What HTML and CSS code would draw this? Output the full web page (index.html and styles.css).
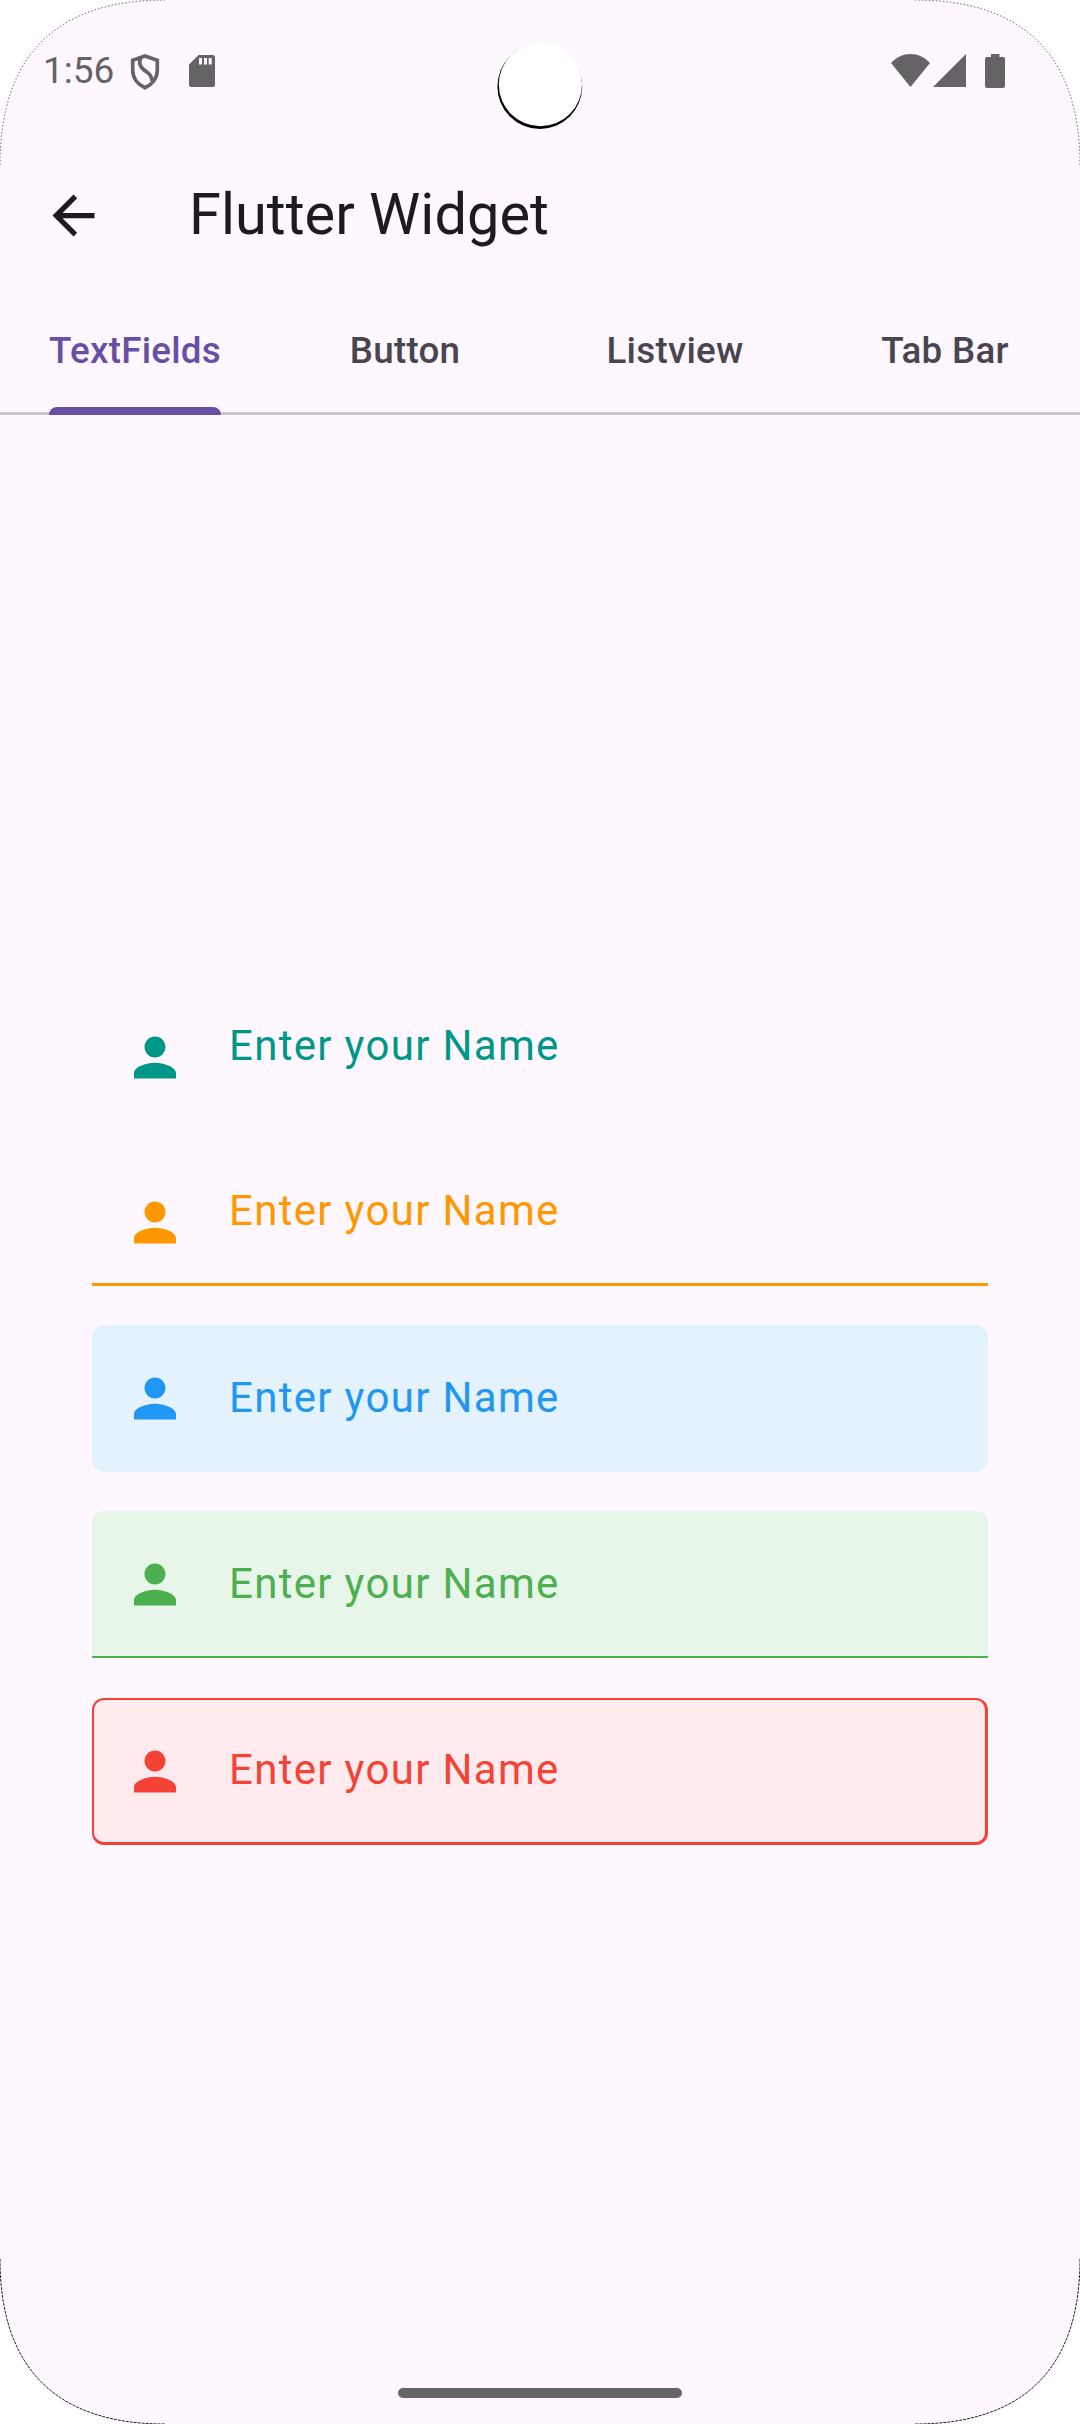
FILE: index.html
```html
<!DOCTYPE html>
<html lang="en">
<head>
<meta charset="utf-8">
<title>Flutter Widget</title>
<link rel="stylesheet" href="styles.css">
</head>
<body>
<svg class="defs" width="0" height="0" aria-hidden="true">
  <symbol id="person" viewBox="-0.190 0 24 24"><path d="M12 12c2.210 0 4-1.790 4-4s-1.790-4-4-4-4 1.790-4 4 1.790 4 4 4zm0 2c-2.670 0-8 1.340-8 4v2h16v-2c0-2.660-5.330-4-8-4z"/></symbol>
</svg>
<div class="screen">
  <header class="status">
    <span class="time">1:56</span>
    <svg class="shield" viewBox="0 0 30 36"><path d="M15 2 27.300 6.300V16c0 8-5 14.500-12.300 17.700C7.700 30.500 2.700 24 2.700 16V6.300zM11 3.500C8.500 8 9.500 12 13.500 15.500S22 20.500 22 27" fill="none" stroke="currentColor" stroke-width="3.700"/></svg>
    <svg class="sd" viewBox="0 0 26 32"><path fill-rule="evenodd" d="M9.500 0H23.500A2.500 2.500 0 0 1 26 2.500V29.500A2.500 2.500 0 0 1 23.500 32H2.500A2.500 2.500 0 0 1 0 29.500V9.500zM10 3v6.500h3V3zM15 3v6.500h3V3zM19.700 3v6.500h3V3z"/></svg>
    <div class="signals">
      <svg class="wifi" viewBox="0 0 39 33"><path d="M0 9C11-3 28-3 39 9L19.500 33z"/></svg>
      <svg class="cell" viewBox="0 0 33 33"><path d="M33 0V33H0z"/></svg>
      <svg class="battery" viewBox="0 0 20 34"><path d="M6 0h8.500v3H18a2 2 0 0 1 2 2v27a2 2 0 0 1-2 2H2a2 2 0 0 1-2-2V5a2 2 0 0 1 2-2h4z"/></svg>
    </div>
  </header>
  <div class="appbar">
    <svg class="back" viewBox="0 0 24 24"><path d="M20 11H7.830l5.590-5.590L12 4l-8 8 8 8 1.410-1.410L7.830 13H20v-2z"/></svg>
    <h1 class="title">Flutter Widget</h1>
  </div>
  <nav class="tabs">
    <div class="tab active"><span class="label">TextFields</span></div>
    <div class="tab"><span class="label">Button</span></div>
    <div class="tab"><span class="label">Listview</span></div>
    <div class="tab"><span class="label">Tab Bar</span></div>
  </nav>
  <main class="form">
    <div class="field plain teal"><svg class="icon"><use href="#person"/></svg><span class="hint">Enter your Name</span></div>
    <div class="field plain orange"><svg class="icon"><use href="#person"/></svg><span class="hint">Enter your Name</span></div>
    <div class="field blue"><svg class="icon"><use href="#person"/></svg><span class="hint">Enter your Name</span></div>
    <div class="field green"><svg class="icon"><use href="#person"/></svg><span class="hint">Enter your Name</span></div>
    <div class="field red"><svg class="icon"><use href="#person"/></svg><span class="hint">Enter your Name</span></div>
  </main>
  <footer class="navbar"><div class="pill"></div></footer>
  <svg class="camera" viewBox="0 0 86 88"><circle cx="42.800" cy="43.500" r="42.400" fill="#000"/><circle cx="43.400" cy="41.600" r="41.600" fill="#fff"/></svg>
  <svg class="bezel" viewBox="0 0 1080 2424">
    <path class="corner" d="M0 0V165C0 56 56 0 165 0zM1080 0V165C1080 56 1024 0 915 0z"/>
    <path class="corner" d="M0 2424V2259C0 2368 56 2424 165 2424zM1080 2424V2259C1080 2368 1024 2424 915 2424z"/>
    <path class="edge" d="M0 165C0 56 56 0 165 0M1080 165C1080 56 1024 0 915 0"/>
    <path class="edge lower" d="M0 2259C0 2368 56 2424 165 2424M1080 2259C1080 2368 1024 2424 915 2424"/>
  </svg>
</div>
</body>
</html>
```
FILE: styles.css
```css
* { box-sizing: border-box; }
body { margin: 0; background: #fff; font-family: Roboto, sans-serif; }
svg { display: block; flex: none; fill: currentColor; }
.defs { position: absolute; }
.screen {
  position: relative;
  display: flex;
  flex-direction: column;
  width: 1080px;
  height: 2424px;
  overflow: hidden;
  background: #fef7ff;
}
.status {
  display: flex;
  height: 142px;
  padding: 54px 75px 0 43px;
  color: #656366;
}
.time { width: 87px; font-size: 37px; line-height: 43px; margin-top: -5px; }
.shield { width: 30px; height: 36px; }
.sd { width: 26px; height: 32px; margin: 1px 0 0 29px; }
.signals { display: flex; margin-left: auto; }
.wifi { width: 39px; height: 33px; }
.cell { width: 33px; height: 33px; margin-left: 3px; }
.battery { width: 20px; height: 34px; margin-left: 19px; }
.appbar {
  display: flex;
  align-items: center;
  gap: 84px;
  height: 147px;
  padding-left: 42px;
  color: #1d1b20;
}
.back { width: 63px; height: 63px; }
.title { margin: 0 0 4px; font-size: 57.75px; font-weight: 400; line-height: 74px; white-space: nowrap; }
.tabs {
  display: grid;
  grid-template-columns: repeat(4, 1fr);
  height: 126px;
  color: #49454f;
  box-shadow: inset 0 -3px #cac4d0;
}
.tab { display: flex; justify-content: center; }
.label {
  display: flex;
  align-items: center;
  padding-bottom: 3px;
  font-size: 36.75px;
  font-weight: 500;
  letter-spacing: 0.26px;
  white-space: nowrap;
}
.active .label { position: relative; color: #6750a4; }
.active .label::after {
  content: "";
  position: absolute;
  left: 0;
  right: 0;
  bottom: 0;
  height: 8px;
  border-radius: 8px 8px 0 0;
  background: #6750a4;
}
.form {
  flex: 1;
  display: flex;
  flex-direction: column;
  gap: 39px;
  padding: 580px 92px 0;
}
.field {
  display: flex;
  align-items: flex-start;
  gap: 43px;
  height: 147px;
  padding: 42px 31px 0;
  border-radius: 12px;
}
.icon { width: 63px; height: 63px; }
.hint { margin-top: -1px; font-size: 42px; line-height: 63px; letter-spacing: 1.31px; white-space: nowrap; }
.plain { height: 126px; padding-top: 31px; border-radius: 0; }
.plain .hint { margin-top: -12px; }
.teal { color: #009688; }
.orange { color: #ff9800; box-shadow: inset 0 -3px #ff9800; }
.blue { color: #2196f3; background: #e3f2fd; }
.green { color: #4caf50; background: #e8f5e9; border-bottom: 2px solid #4caf50; border-radius: 11px 11px 0 0; }
.red {
  margin-top: 1px;
  padding: 40px 29px 0;
  color: #f44336;
  background: #ffebee;
  border: solid #f44336;
  border-width: 2px 3px 3px 2px;
}
.red .hint { margin-top: -2px; }
.navbar { display: flex; justify-content: center; height: 63px; padding-top: 27px; }
.pill { width: 284px; height: 10px; border-radius: 5px; background: #656366; }
.camera { position: absolute; left: 497px; top: 43px; width: 86px; height: 88px; }
.bezel { position: absolute; left: 0; top: 0; width: 1080px; height: 2424px; }
.corner { fill: #fff; }
.edge { fill: none; stroke: #444; stroke-width: 0.8; stroke-dasharray: 1.5 2; }
.lower { stroke: #222; stroke-width: 1; stroke-dasharray: 3 1; }
```
